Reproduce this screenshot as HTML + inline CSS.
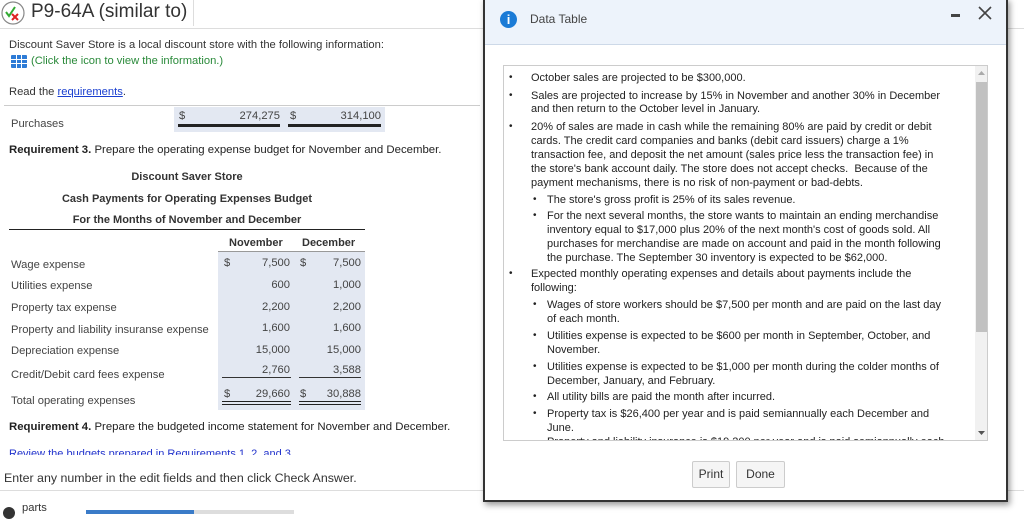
<!DOCTYPE html>
<html><head><meta charset="utf-8"><style>
*{margin:0;padding:0;box-sizing:border-box}
body{width:1024px;height:512px;overflow:hidden;background:#fff;font-family:"Liberation Sans",Arial,sans-serif;color:#222;position:relative}
.a{position:absolute;white-space:nowrap}
.s{font-size:11.2px;color:#444}
.r{text-align:right}
.l{position:absolute;line-height:14px;font-size:11px;color:#222;white-space:nowrap}
.b{position:absolute;font-size:10px;line-height:14px;color:#222}
</style></head><body>
<svg class="a" style="left:1px;top:1px" width="24" height="24" viewBox="0 0 24 24"><circle cx="12" cy="12" r="11" fill="#fff" stroke="#888" stroke-width="1.2"/><path d="M5 11l3 4 6-9" stroke="#3a3" stroke-width="2" fill="none"/><path d="M11 13l6 6M17 13l-6 6" stroke="#d22" stroke-width="2"/></svg>
<div class="a" style="left:31px;top:1px;font-size:19px;color:#333">P9-64A (similar to)</div>
<div class="a" style="left:193px;top:0;width:1px;height:26px;background:#ddd"></div>
<div class="a" style="left:0;top:28px;width:1024px;height:1px;background:#ddd"></div>
<div class="a" style="left:9px;top:39px;font-size:11.2px;color:#333">Discount Saver Store is a local discount store with the following information:</div>
<div class="a" style="left:11px;top:55px;width:16px;height:13px;background:#2d7bd6;border-radius:1px"></div>
<svg class="a" style="left:11px;top:55px" width="16" height="13"><path d="M0 4.5h16M0 8.5h16M5.5 0v13M10.5 0v13" stroke="#fff" stroke-width="1"/></svg>
<div class="a" style="left:31px;top:55px;font-size:11.2px;color:#2a8a3a">(Click the icon to view the information.)</div>
<div class="a" style="left:9px;top:86px;font-size:11.2px;color:#333">Read the <span style="color:#1a3fd0;text-decoration:underline">requirements</span>.</div>
<div class="a" style="left:4px;top:105px;width:476px;height:1px;background:#ccc"></div>
<div class="a s" style="left:11px;top:118px">Purchases</div>
<div class="a" style="left:174px;top:107px;width:211px;height:25px;background:#e3e8f2"></div>
<div class="a s" style="left:179px;top:110px">$</div>
<div class="a s r" style="left:200px;top:110px;width:80px">274,275</div>
<div class="a s" style="left:290px;top:110px">$</div>
<div class="a s r" style="left:300px;top:110px;width:81px">314,100</div>
<div class="a" style="left:178px;top:124px;width:102px;height:3px;background:#222"></div>
<div class="a" style="left:288px;top:124px;width:93px;height:3px;background:#222"></div>
<div class="a" style="left:9px;top:144px;font-size:11.4px;color:#222"><b>Requirement 3.</b> Prepare the operating expense budget for November and December.</div>
<div class="a" style="left:9px;top:171px;width:356px;text-align:center;font-size:11px;font-weight:bold;color:#333">Discount Saver Store</div>
<div class="a" style="left:9px;top:193px;width:356px;text-align:center;font-size:11px;font-weight:bold;color:#333">Cash Payments for Operating Expenses Budget</div>
<div class="a" style="left:9px;top:214px;width:356px;text-align:center;font-size:11px;font-weight:bold;color:#333">For the Months of November and December</div>
<div class="a" style="left:9px;top:229px;width:356px;height:1px;background:#222"></div>
<div class="a" style="left:218px;top:237px;width:150px;font-size:11px;font-weight:bold;color:#333"><span style="position:absolute;left:11px">November</span><span style="position:absolute;left:84px">December</span></div>
<div class="a" style="left:218px;top:251px;width:147px;height:1px;background:#999"></div>
<div class="a" style="left:218px;top:252px;width:147px;height:158px;background:#e3e8f2"></div>
<div class="a s" style="left:11px;top:259px">Wage expense</div>
<div class="a s" style="left:11px;top:280px">Utilities expense</div>
<div class="a s" style="left:11px;top:302px">Property tax expense</div>
<div class="a s" style="left:11px;top:324px">Property and liability insuranse expense</div>
<div class="a s" style="left:11px;top:345px">Depreciation expense</div>
<div class="a s" style="left:11px;top:369px">Credit/Debit card fees expense</div>
<div class="a s" style="left:11px;top:395px">Total operating expenses</div>
<div class="a s" style="left:224px;top:257px">$</div><div class="a s" style="left:300px;top:257px">$</div>
<div class="a s r" style="left:230px;top:257px;width:60px">7,500</div><div class="a s r" style="left:300px;top:257px;width:61px">7,500</div>
<div class="a s r" style="left:230px;top:279px;width:60px">600</div><div class="a s r" style="left:300px;top:279px;width:61px">1,000</div>
<div class="a s r" style="left:230px;top:301px;width:60px">2,200</div><div class="a s r" style="left:300px;top:301px;width:61px">2,200</div>
<div class="a s r" style="left:230px;top:322px;width:60px">1,600</div><div class="a s r" style="left:300px;top:322px;width:61px">1,600</div>
<div class="a s r" style="left:230px;top:344px;width:60px">15,000</div><div class="a s r" style="left:300px;top:344px;width:61px">15,000</div>
<div class="a s r" style="left:230px;top:364px;width:60px">2,760</div><div class="a s r" style="left:300px;top:364px;width:61px">3,588</div>
<div class="a" style="left:222px;top:377px;width:69px;height:1px;background:#333"></div><div class="a" style="left:299px;top:377px;width:62px;height:1px;background:#333"></div>
<div class="a s" style="left:224px;top:388px">$</div><div class="a s" style="left:300px;top:388px">$</div>
<div class="a s r" style="left:230px;top:388px;width:60px">29,660</div><div class="a s r" style="left:300px;top:388px;width:61px">30,888</div>
<div class="a" style="left:222px;top:401px;width:69px;height:4px;border-top:1px solid #222;border-bottom:1px solid #222"></div><div class="a" style="left:299px;top:401px;width:62px;height:4px;border-top:1px solid #222;border-bottom:1px solid #222"></div>
<div class="a" style="left:9px;top:421px;font-size:11.4px;color:#222"><b>Requirement 4.</b> Prepare the budgeted income statement for November and December.</div>
<div class="a" style="left:9px;top:447px;height:8px;overflow:hidden;font-size:11px;color:#2233cc;line-height:14px">Review the budgets prepared in Requirements 1, 2, and 3.</div>
<div class="a" style="left:4px;top:471px;font-size:12.4px;color:#333">Enter any number in the edit fields and then click Check Answer.</div>
<div class="a" style="left:0;top:490px;width:1024px;height:1px;background:#ddd"></div>
<div class="a" style="left:3px;top:507px;width:12px;height:12px;border-radius:50%;background:#333"></div>
<div class="a" style="left:22px;top:502px;font-size:11.2px;color:#333">parts</div>
<div class="a" style="left:86px;top:510px;width:108px;height:4px;background:#3a7bc8"></div>
<div class="a" style="left:194px;top:510px;width:100px;height:4px;background:#ddd"></div>
<div class="a" style="left:483px;top:-2px;width:525px;height:504px;border:2px solid #333;background:#fff;box-shadow:2px 3px 6px rgba(0,0,0,.4)"></div>
<div class="a" style="left:485px;top:0;width:521px;height:45px;background:#edf3fb;border-bottom:1px solid #cdd9e8"></div>
<div class="a" style="left:500px;top:11px;width:17px;height:17px;border-radius:50%;background:#1b7bd6;color:#fff;font-size:13px;font-weight:bold;text-align:center;line-height:17px;font-family:'Liberation Sans',sans-serif">i</div>
<div class="a" style="left:530px;top:12px;font-size:12px;color:#444">Data Table</div>
<div class="a" style="left:951px;top:14px;width:9px;height:3px;background:#444"></div>
<svg class="a" style="left:977px;top:5px" width="16" height="16"><path d="M2 2l12 12M14 2L2 14" stroke="#444" stroke-width="1.6"/></svg>
<div class="a" style="left:503px;top:65px;width:485px;height:376px;border:1px solid #ccc;overflow:hidden">
<div class="a" style="left:471px;top:0;width:13px;height:376px;background:#f1f1f1"></div>
<div class="a" style="left:472px;top:16px;width:11px;height:250px;background:#c1c1c1"></div>
<svg class="a" style="left:473px;top:4px" width="9" height="6"><path d="M1 5l3.5-4 3.5 4z" fill="#aaa"/></svg>
<svg class="a" style="left:473px;top:364px" width="9" height="6"><path d="M1 1l3.5 4 3.5-4z" fill="#555"/></svg>
</div>
<div class="a" style="left:504px;top:66px;width:469px;height:374px;overflow:hidden">
<div class="b" style="left:5px;top:5px">•</div><div class="l" style="left:27px;top:5px">October sales are projected to be $300,000.</div>
<div class="b" style="left:5px;top:23px">•</div><div class="l" style="left:27px;top:23px">Sales are projected to increase by 15% in November and another 30% in December</div>
<div class="l" style="left:27px;top:36px">and then return to the October level in January.</div>
<div class="b" style="left:5px;top:54px">•</div><div class="l" style="left:27px;top:54px">20% of sales are made in cash while the remaining 80% are paid by credit or debit</div>
<div class="l" style="left:27px;top:68px">cards. The credit card companies and banks (debit card issuers) charge a 1%</div>
<div class="l" style="left:27px;top:82px">transaction fee, and deposit the net amount (sales price less the transaction fee) in</div>
<div class="l" style="left:27px;top:96px">the store's bank account daily. The store does not accept checks.&nbsp; Because of the</div>
<div class="l" style="left:27px;top:110px">payment mechanisms, there is no risk of non-payment or bad-debts.</div>
<div class="b" style="left:29px;top:127px">•</div><div class="l" style="left:43px;top:127px">The store's gross profit is 25% of its sales revenue.</div>
<div class="b" style="left:29px;top:143px">•</div><div class="l" style="left:43px;top:143px">For the next several months, the store wants to maintain an ending merchandise</div>
<div class="l" style="left:43px;top:157px">inventory equal to $17,000 plus 20% of the next month's cost of goods sold. All</div>
<div class="l" style="left:43px;top:171px">purchases for merchandise are made on account and paid in the month following</div>
<div class="l" style="left:43px;top:185px">the purchase. The September 30 inventory is expected to be $62,000.</div>
<div class="b" style="left:5px;top:201px">•</div><div class="l" style="left:27px;top:201px">Expected monthly operating expenses and details about payments include the</div>
<div class="l" style="left:27px;top:215px">following:</div>
<div class="b" style="left:29px;top:232px">•</div><div class="l" style="left:43px;top:232px">Wages of store workers should be $7,500 per month and are paid on the last day</div>
<div class="l" style="left:43px;top:246px">of each month.</div>
<div class="b" style="left:29px;top:263px">•</div><div class="l" style="left:43px;top:263px">Utilities expense is expected to be $600 per month in September, October, and</div>
<div class="l" style="left:43px;top:277px">November.</div>
<div class="b" style="left:29px;top:294px">•</div><div class="l" style="left:43px;top:294px">Utilities expense is expected to be $1,000 per month during the colder months of</div>
<div class="l" style="left:43px;top:308px">December, January, and February.</div>
<div class="b" style="left:29px;top:324px">•</div><div class="l" style="left:43px;top:324px">All utility bills are paid the month after incurred.</div>
<div class="b" style="left:29px;top:341px">•</div><div class="l" style="left:43px;top:341px">Property tax is $26,400 per year and is paid semiannually each December and</div>
<div class="l" style="left:43px;top:355px">June.</div>
<div class="l" style="left:43px;top:369px">Property and liability insurance is $19,200 per year and is paid semiannually each</div>
</div>
<div class="a" style="left:692px;top:461px;width:38px;height:27px;border:1px solid #ccc;border-radius:2px;background:#f5f5f5;font-size:12px;color:#333;text-align:center;line-height:25px">Print</div>
<div class="a" style="left:736px;top:461px;width:49px;height:27px;border:1px solid #ccc;border-radius:2px;background:#f5f5f5;font-size:12px;color:#333;text-align:center;line-height:25px">Done</div>
</body></html>
